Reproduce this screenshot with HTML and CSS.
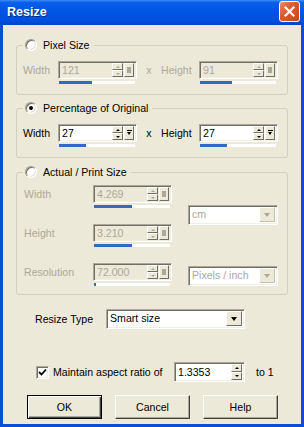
FILE: index.html
```html
<!DOCTYPE html>
<html lang="en">
<head>
<meta charset="UTF-8">
<title>Resize</title>
<link rel="stylesheet" href="styles.css">
</head>
<body>
<div class="window">
  <div class="titlebar">
    <span class="title">Resize</span>
    <span class="close"><svg width="13" height="13" viewBox="0 0 13 13"><path d="M2.5 2.5L10.5 10.5M10.5 2.5L2.5 10.5" stroke="#fff" stroke-width="2.2" stroke-linecap="square"/></svg></span>
  </div>
  <div class="client">
    <!-- pixel size -->
    <fieldset class="group g1">
      <legend><span class="radio"></span>Pixel Size</legend>
      <div class="row off">
        <span class="lbl">Width</span>
        <div class="spin">
          <div class="frame">
            <span class="val">121</span>
            <span class="arrows"><i class="btn up"></i><i class="btn dn"></i></span>
            <span class="btn opt"></span>
          </div>
          <div class="bar"><div class="fill" style="width:44%"></div></div>
        </div>
        <span class="times">x</span>
        <span class="lbl2">Height</span>
        <div class="spin">
          <div class="frame">
            <span class="val">91</span>
            <span class="arrows"><i class="btn up"></i><i class="btn dn"></i></span>
            <span class="btn opt"></span>
          </div>
          <div class="bar"><div class="fill" style="width:42%"></div></div>
        </div>
      </div>
    </fieldset>

    <!-- percentage -->
    <fieldset class="group g2">
      <legend><span class="radio on"></span>Percentage of Original</legend>
      <div class="row">
        <span class="lbl">Width</span>
        <div class="spin">
          <div class="frame">
            <span class="val">27</span>
            <span class="arrows"><i class="btn up"></i><i class="btn dn"></i></span>
            <span class="btn opt"><i class="menu"></i></span>
          </div>
          <div class="bar"><div class="fill" style="width:35%"></div></div>
        </div>
        <span class="times">x</span>
        <span class="lbl2">Height</span>
        <div class="spin">
          <div class="frame">
            <span class="val">27</span>
            <span class="arrows"><i class="btn up"></i><i class="btn dn"></i></span>
            <span class="btn opt"><i class="menu"></i></span>
          </div>
          <div class="bar"><div class="fill" style="width:35%"></div></div>
        </div>
      </div>
    </fieldset>

    <!-- actual / print -->
    <fieldset class="group g3">
      <legend><span class="radio"></span>Actual / Print Size</legend>
      <div class="print off">
        <span class="lbl r1">Width</span>
        <div class="spin r1">
          <div class="frame">
            <span class="val">4.269</span>
            <span class="arrows"><i class="btn up"></i><i class="btn dn"></i></span>
            <span class="btn opt"></span>
          </div>
          <div class="bar"><div class="fill" style="width:50%"></div></div>
        </div>
        <div class="combo unit"><span class="val">cm</span><span class="btn drop"></span></div>

        <span class="lbl r2">Height</span>
        <div class="spin r2">
          <div class="frame">
            <span class="val">3.210</span>
            <span class="arrows"><i class="btn up"></i><i class="btn dn"></i></span>
            <span class="btn opt"></span>
          </div>
          <div class="bar"><div class="fill" style="width:50%"></div></div>
        </div>

        <span class="lbl r3">Resolution</span>
        <div class="spin r3">
          <div class="frame">
            <span class="val">72.000</span>
            <span class="arrows"><i class="btn up"></i><i class="btn dn"></i></span>
            <span class="btn opt"></span>
          </div>
          <div class="bar"><div class="fill" style="width:2%"></div></div>
        </div>
        <div class="combo res"><span class="val">Pixels / inch</span><span class="btn drop"></span></div>
      </div>
    </fieldset>

    <div class="type-row">
      <span class="type-lbl">Resize Type</span>
      <div class="combo type"><span class="val">Smart size</span><span class="btn drop"></span></div>
    </div>

    <div class="aspect-row">
      <span class="check"><svg width="9" height="9" viewBox="0 0 9 9"><path d="M1 4L3.5 6.5L8 1.5" stroke="#000" stroke-width="1.8" fill="none"/></svg></span>
      <span class="aspect-lbl">Maintain aspect ratio of</span>
      <div class="ratio">
        <span class="val">1.3353</span>
        <span class="arrows"><i class="btn up"></i><i class="btn dn"></i></span>
      </div>
      <span class="to">to 1</span>
    </div>

    <div class="buttons">
      <button class="button default">OK</button>
      <button class="button">Cancel</button>
      <button class="button">Help</button>
    </div>
  </div>
</div>
</body>
</html>
```

FILE: styles.css
```css
body {
  margin: 0;
  font-family: "Liberation Sans", Arial, sans-serif;
  font-size: 10.6px;
  color: #000;
}

.window {
  width: 304px;
  height: 427px;
  display: flex;
  flex-direction: column;
}

/* title bar */
.titlebar {
  height: 25px;
  display: flex;
  align-items: center;
  justify-content: space-between;
  padding: 0 4px 0 7px;
  background: linear-gradient(#3d8cf5 0, #0a5fec 10%, #0055e5 45%, #004fdc 85%, #0042c4 100%);
}

.title {
  color: #fff;
  font-weight: bold;
  font-size: 12.5px;
  text-shadow: 1px 1px #0a2a7a;
  margin-bottom: 2px;
}

.close {
  width: 21px;
  height: 21px;
  box-sizing: border-box;
  border: 1px solid #fff;
  border-radius: 3px;
  background: linear-gradient(135deg, #f08a6a 0, #e0582f 40%, #cc4318 100%);
  display: flex;
  align-items: center;
  justify-content: center;
  margin-bottom: 3px;
}

.client {
  flex: 1;
  background: #ece9d8;
  border: 3px solid #0a4ed6;
  border-top: 0;
}

/* group boxes */
.group {
  border: 1px solid #d0d0bf;
  border-radius: 3px;
  margin: 0 13px;
  padding: 0 0 10px;
}

.g1 { margin-top: 13px; }
.g2 { margin-top: 6px; }
.g3 { margin-top: 7px; padding-bottom: 8px; }

.group legend {
  display: flex;
  align-items: center;
  height: 14px;
  margin-left: 6px;
  padding: 0 4px 0 2px;
}

.radio {
  width: 12px;
  height: 12px;
  box-sizing: border-box;
  border-radius: 50%;
  border: 1px solid;
  border-color: #9d9a8c #fff #fff #9d9a8c;
  box-shadow: inset 1px 1px #716f64, inset -1px -1px #e2dfd0;
  background: #fff;
  margin-right: 6px;
  display: flex;
  align-items: center;
  justify-content: center;
}

.radio.on::after {
  content: "";
  width: 4px;
  height: 4px;
  border-radius: 50%;
  background: #000;
}

.row {
  display: flex;
  margin-top: 9px;
  padding-left: 6px;
  line-height: 18px;
}

.off .lbl, .off .lbl2, .off .times, .off .val {
  color: #aca899;
}

.lbl { width: 35px; }
.times { width: 24px; text-align: center; }
.lbl2 { width: 38px; }

/* spin box with slider strip */
.spin { width: 79px; }

.frame {
  height: 18px;
  box-sizing: border-box;
  border: 1px solid;
  border-color: #aca899 #fff #fff #aca899;
  box-shadow: inset 1px 1px #716f64, inset -1px -1px #f1efe2;
  padding: 1px 2px 1px 1px;
  display: flex;
  background: #fff;
}

.off .frame, .off.combo { background: #ece9d8; }

.val {
  flex: 1;
  padding-left: 2px;
  line-height: 14px;
  white-space: nowrap;
  overflow: hidden;
}

.arrows {
  width: 11px;
  display: flex;
  flex-direction: column;
}

.arrows .btn { height: 7px; }

.btn {
  box-sizing: border-box;
  background: #ece9d8;
  border: 1px solid;
  border-color: #fff #716f64 #716f64 #fff;
  display: flex;
  align-items: center;
  justify-content: center;
}

.up::after, .dn::after, .drop::after {
  content: "";
  border-left: 2px solid transparent;
  border-right: 2px solid transparent;
}

.up::after { border-bottom: 2px solid #000; }
.dn::after { border-top: 2px solid #000; }
.off .up::after { border-bottom-color: #aca899; }
.off .dn::after { border-top-color: #aca899; }

.opt {
  width: 10px;
  margin-left: 1px;
}

.off .opt::after {
  content: "";
  width: 4px;
  height: 6px;
  background: #aca899;
}

.menu {
  width: 5px;
  height: 6px;
  box-sizing: border-box;
  border-top: 1px solid #000;
  position: relative;
}

.menu::after {
  content: "";
  position: absolute;
  left: 0;
  top: 1px;
  border-left: 2.5px solid transparent;
  border-right: 2.5px solid transparent;
  border-top: 3px solid #000;
}

.bar {
  height: 3px;
  margin: 2px 2px 0 1px;
  background: #fff;
}

.fill {
  height: 100%;
  background: #316ac5;
}

/* print size grid */
.print {
  display: grid;
  grid-template-columns: 69px 79px 16px 90px;
  grid-template-rows: 23px 23px 23px;
  row-gap: 16px;
  margin-top: 6px;
  padding-left: 7px;
  line-height: 18px;
}

.r1 { grid-row: 1; }
.r2 { grid-row: 2; }
.r3 { grid-row: 3; }
.print .lbl { grid-column: 1; width: auto; }
.print .spin { grid-column: 2; }

.combo {
  height: 20px;
  box-sizing: border-box;
  border: 1px solid;
  border-color: #aca899 #fff #fff #aca899;
  box-shadow: inset 1px 1px #716f64, inset -1px -1px #f1efe2;
  padding: 1px 2px 2px 1px;
  display: flex;
  background: #fff;
}

.combo .val { line-height: 15px; }

.drop { width: 16px; }
.drop::after {
  border-left-width: 3.5px;
  border-right-width: 3.5px;
  border-top: 4px solid #000;
}

.off .drop { border-color: #fff #c5c2b2 #c5c2b2 #fff; }
.off .drop::after { border-top-color: #aca899; }

.unit {
  grid-column: 4;
  grid-row: 1 / 3;
  align-self: center;
  margin-top: -2px;
}

.res {
  grid-column: 4;
  grid-row: 3;
  align-self: end;
}

/* bottom controls */
.type-row {
  display: flex;
  align-items: center;
  margin-top: 14px;
  padding-left: 32px;
}

.type-lbl { width: 71px; }
.type { width: 139px; }

.aspect-row {
  display: flex;
  align-items: center;
  margin-top: 33px;
  padding-left: 33px;
}

.check {
  width: 13px;
  height: 13px;
  box-sizing: border-box;
  border: 1px solid;
  border-color: #aca899 #fff #fff #aca899;
  box-shadow: inset 1px 1px #716f64, inset -1px -1px #f1efe2;
  background: #fff;
  display: flex;
  align-items: center;
  justify-content: center;
  margin-right: 4px;
}

.aspect-lbl { width: 121px; }

.ratio {
  width: 71px;
  height: 20px;
  box-sizing: border-box;
  border: 1px solid;
  border-color: #aca899 #fff #fff #aca899;
  box-shadow: inset 1px 1px #716f64, inset -1px -1px #f1efe2;
  padding: 1px 2px 1px 1px;
  display: flex;
  background: #fff;
}

.ratio .val { line-height: 16px; }
.ratio .arrows .btn { height: 8px; }

.to { margin-left: 11px; }

.buttons {
  display: flex;
  gap: 13px;
  margin-top: 13px;
  padding-left: 24px;
}

.button {
  width: 75px;
  height: 24px;
  box-sizing: border-box;
  font-family: "Liberation Sans", Arial, sans-serif;
  font-size: 10.6px;
  color: #000;
  background: #ece9d8;
  border: 1px solid;
  border-color: #fff #404040 #404040 #fff;
  box-shadow: inset -1px -1px #aca899;
  padding: 0;
}

.default {
  border: 1px solid #000;
  box-shadow: inset 1px 1px #fff, inset -1px -1px #404040, inset -2px -2px #aca899;
}
```
